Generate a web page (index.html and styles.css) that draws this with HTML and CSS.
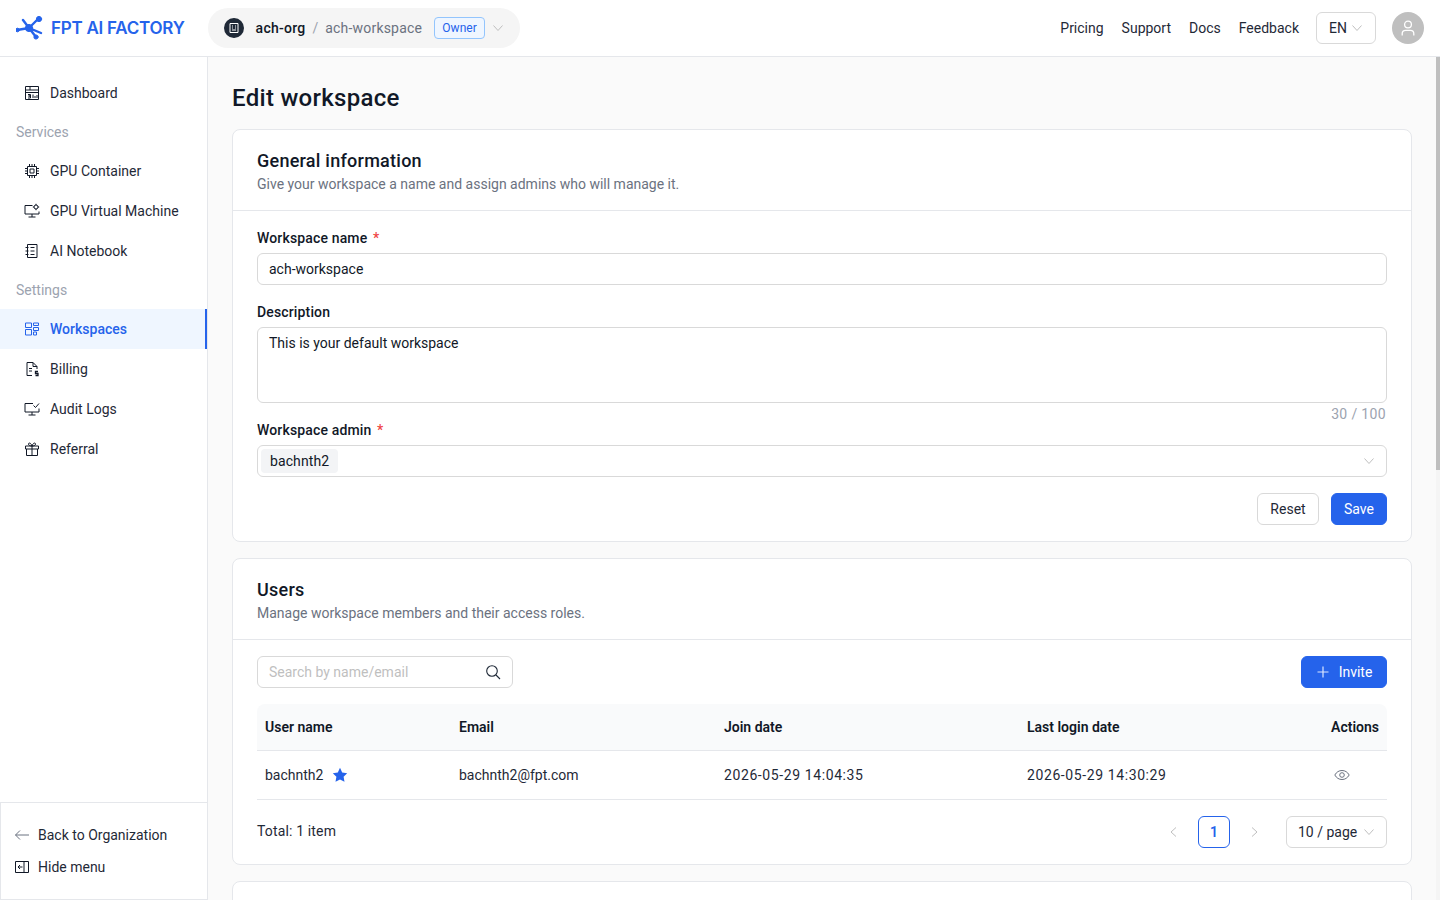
FILE: index.html
```html
<!DOCTYPE html>
<html lang="en">
<head>
    <meta charset="UTF-8">
    <title>Edit workspace - FPT AI Factory</title>
    <link rel="stylesheet" href="styles.css">
</head>
<body>
    <header class="topbar">
        <a class="logo">
            <svg class="logo-mark" viewBox="1 1 30 26" width="30" height="26">
                <g fill="#2563eb" stroke="#2563eb" stroke-linecap="round">
                    <path d="M2 16 L14 14 M14 14 L24 4 M14 14 L21 23 M14 14 L8 6 M14 14 L26 19" stroke-width="2.400" fill="none"/>
                    <circle cx="2.500" cy="16" r="1.800"/>
                    <circle cx="14" cy="14" r="3.600"/>
                    <circle cx="24" cy="5" r="2.600"/>
                    <circle cx="21" cy="23" r="2.100"/>
                </g>
            </svg>
            <span>FPT AI FACTORY</span>
        </a>
        <div class="context">
            <span class="org-icon">
                <svg viewBox="0 0 12 12" width="12" height="12" fill="none" stroke="#fff" stroke-width="1">
                    <path d="M2 1.500h8v9H2z M4 4h1 M7 4h1 M4 6h1 M7 6h1 M4 8h4"/>
                </svg>
            </span>
            <span class="org-name">ach-org</span>
            <span class="context-sep">/</span>
            <span class="workspace-name">ach-workspace</span>
            <span class="role-tag">Owner</span>
            <svg class="chevron" viewBox="0 0 12 12" width="12" height="12"><path d="M1.500 3.500 L6 8.500 L10.500 3.500"/></svg>
        </div>
        <nav class="top-links">
            <a>Pricing</a>
            <a>Support</a>
            <a>Docs</a>
            <a>Feedback</a>
        </nav>
        <div class="lang-select">
            <span>EN</span>
            <svg class="chevron" viewBox="0 0 12 12" width="12" height="12"><path d="M1.500 3.500 L6 8.500 L10.500 3.500"/></svg>
        </div>
        <span class="avatar">
            <svg viewBox="0 0 18 18" width="18" height="18" fill="none" stroke="#fff" stroke-width="1.300">
                <circle cx="9" cy="5.500" r="3.400"/>
                <path d="M3.200 16.500v-1.800c0-2 1.600-3.400 3.400-3.400h4.800c1.800 0 3.400 1.400 3.400 3.400v1.800"/>
            </svg>
        </span>
    </header>

    <div class="layout">
        <aside class="sidebar">
            <nav class="side-nav">
                <a class="nav-item">
                    <svg class="icon" viewBox="0 0 16 16"><path d="M1.500 1.500h13v13h-13z M1.500 5h13 M6 1.500V5 M1.500 7.500h13 M4 9.500h2.500v1.500H4.500h2v2H4 M9 9.500V13 M11 11v2 M13 10v3"/></svg>
                    Dashboard
                </a>
                <div class="nav-label">Services</div>
                <a class="nav-item">
                    <svg class="icon" viewBox="0 0 16 16"><path d="M3.500 3.500h9v9h-9z M6 6h4v4H6z M5.500 1v2.500 M8 1v2.500 M10.500 1v2.500 M5.500 12.500V15 M8 12.500V15 M10.500 12.500V15 M1 5.500h2.500 M1 8h2.500 M1 10.500h2.500 M12.500 5.500H15 M12.500 8H15 M12.500 10.500H15"/></svg>
                    GPU Container
                </a>
                <a class="nav-item">
                    <svg class="icon" viewBox="0 0 16 16"><path d="M8.500 2.500H1v8.500h14V8.500 M8 11v3 M4.500 14h7"/><circle cx="12" cy="4" r="2"/><path d="M12 .8v1.200 M12 6v1.200 M8.800 4H10 M14 4h1.200"/></svg>
                    GPU Virtual Machine
                </a>
                <a class="nav-item">
                    <svg class="icon" viewBox="0 0 16 16"><path d="M3.500 1.500h9.500v13H3.500z M1.500 4.500h3 M1.500 8h3 M1.500 11.500h3 M6.500 4.500h4 M6.500 8h4 M6.500 11.500h4"/></svg>
                    AI Notebook
                </a>
                <div class="nav-label">Settings</div>
                <a class="nav-item active">
                    <svg class="icon" viewBox="0 0 16 16"><path d="M1.500 2h6v4.500h-6z M9.500 2h5v2.500h-5z M9.500 6.500h5v3h-5z M1.500 8.500h6v5.500h-6z M9.500 11h3v3h-3z"/></svg>
                    Workspaces
                </a>
                <a class="nav-item">
                    <svg class="icon" viewBox="0 0 16 16"><path d="M9 1.500H3v13h5 M9 1.500l4 4v2.500 M9 1.500v4h4 M5 7.500h3 M5 10h3"/><path d="M14 10.500h-2.500v2h2.500v2h-2.500" stroke-width="1.300"/></svg>
                    Billing
                </a>
                <a class="nav-item">
                    <svg class="icon" viewBox="0 0 16 16"><path d="M9 2.500H1v8.500h14V7.500 M8 11v3 M4.500 14h7 M9.500 4.500l2 2 3.500-4"/></svg>
                    Audit Logs
                </a>
                <a class="nav-item">
                    <svg class="icon" viewBox="0 0 16 16"><path d="M1.500 5h13v3h-13z M2.500 8v6.500h11V8 M8 5v9.500 M8 5C6 5 4.500 4.300 4.500 3 4.500 1.600 6.800 1.300 8 5 M8 5c2 0 3.500-.7 3.500-2 0-1.400-2.300-1.700-3.500 2"/></svg>
                    Referral
                </a>
            </nav>
            <div class="side-bottom">
                <a class="bottom-item">
                    <svg class="icon back-icon" viewBox="0 0 16 16"><path d="M15 8H1.500 M6 3.500 L1.500 8 L6 12.500"/></svg>
                    Back to Organization
                </a>
                <a class="bottom-item">
                    <svg class="icon" viewBox="0 0 16 16"><path d="M1.500 2.500h13v11h-13z M10 2.500v11 M8.500 8H4 M6 6L4 8l2 2"/></svg>
                    Hide menu
                </a>
            </div>
        </aside>

        <main class="main">
            <h1 class="page-title">Edit workspace</h1>

            <section class="card">
                <div class="card-head">
                    <h2>General information</h2>
                    <p>Give your workspace a name and assign admins who will manage it.</p>
                </div>
                <div class="card-body">
                    <div class="field">
                        <label class="required">Workspace name</label>
                        <div class="input">ach-workspace</div>
                    </div>
                    <div class="field field-counted">
                        <label>Description</label>
                        <div class="input textarea">This is your default workspace</div>
                        <div class="count">30 / 100</div>
                    </div>
                    <div class="field">
                        <label class="required">Workspace admin</label>
                        <div class="input select">
                            <span class="select-tag">bachnth2</span>
                            <svg class="chevron" viewBox="0 0 12 12" width="12" height="12"><path d="M1.500 3.500 L6 8.500 L10.500 3.500"/></svg>
                        </div>
                    </div>
                    <div class="form-actions">
                        <button class="btn btn-reset">Reset</button>
                        <button class="btn btn-primary btn-save">Save</button>
                    </div>
                </div>
            </section>

            <section class="card">
                <div class="card-head">
                    <h2>Users</h2>
                    <p>Manage workspace members and their access roles.</p>
                </div>
                <div class="card-body">
                    <div class="toolbar">
                        <div class="search">
                            <span>Search by name/email</span>
                            <svg viewBox="0 0 16 16" width="16" height="16" fill="none" stroke="#1f2937" stroke-width="1.100"><circle cx="7" cy="7" r="5.300"/><path d="M11 11l4 4"/></svg>
                        </div>
                        <button class="btn btn-primary btn-invite">
                            <svg viewBox="0 0 14 14" width="14" height="14" fill="none" stroke="#dbe6ff" stroke-width="1.200"><path d="M7 1.500v11 M1.500 7h11"/></svg>
                            Invite
                        </button>
                    </div>
                    <table class="users">
                        <thead>
                            <tr>
                                <th class="col-name">User name</th>
                                <th class="col-email">Email</th>
                                <th class="col-join">Join date</th>
                                <th>Last login date</th>
                                <th class="col-actions">Actions</th>
                            </tr>
                        </thead>
                        <tbody>
                            <tr>
                                <td>
                                    <span class="user-cell">bachnth2
                                        <svg viewBox="0 0 16 16" width="16" height="16" fill="#2563eb"><path d="M8 .8l2.200 4.700 5 .7-3.600 3.500.9 5.100L8 12.400l-4.500 2.400.9-5.100L.8 6.200l5-.7z"/></svg>
                                    </span>
                                </td>
                                <td>bachnth2@fpt.com</td>
                                <td class="date">2026-05-29 14:04:35</td>
                                <td class="date">2026-05-29 14:30:29</td>
                                <td class="col-actions">
                                    <svg class="eye" viewBox="0 0 16 16" width="16" height="16" fill="none" stroke="#6b7280" stroke-width="1"><path d="M.8 8C2.500 5 5 3.500 8 3.500S13.500 5 15.200 8C13.500 11 11 12.500 8 12.500S2.500 11 .8 8z"/><circle cx="8" cy="8" r="2.300"/></svg>
                                </td>
                            </tr>
                        </tbody>
                    </table>
                    <div class="table-foot">
                        <span class="total">Total: 1 item</span>
                        <div class="pager">
                            <svg class="pager-arrow" viewBox="0 0 12 12" width="12" height="12"><path d="M8 1.500L3 6l5 4.500"/></svg>
                            <span class="page-current">1</span>
                            <svg class="pager-arrow" viewBox="0 0 12 12" width="12" height="12"><path d="M4 1.500L9 6l-5 4.500"/></svg>
                            <div class="page-size">
                                10 / page
                                <svg class="chevron" viewBox="0 0 12 12" width="12" height="12"><path d="M1.500 3.500 L6 8.500 L10.500 3.500"/></svg>
                            </div>
                        </div>
                    </div>
                </div>
            </section>

            <section class="card card-next"></section>
        </main>

        <div class="scroll-track"><div class="scroll-thumb"></div></div>
    </div>
</body>
</html>
```

FILE: styles.css
```css
* {
    box-sizing: border-box;
}

body {
    margin: 0;
    height: 100vh;
    overflow: hidden;
    display: flex;
    flex-direction: column;
    font-family: Roboto, "Liberation Sans", sans-serif;
    font-size: 14px;
    line-height: 22px;
    color: #1f2937;
    background-color: #fff;
}

.chevron {
    flex: none;
    fill: none;
    stroke: #bfbfbf;
    stroke-width: 1;
}

/* top bar */

.topbar {
    flex: none;
    height: 57px;
    display: flex;
    align-items: center;
    padding: 0 16px;
    border-bottom: 1px solid #e5e7eb;
    background-color: #fff;
}

.logo {
    width: 192px;
    display: flex;
    align-items: center;
    gap: 5px;
    color: #2563eb;
    font-family: Inter, sans-serif;
    font-size: 17px;
    font-weight: 600;
    letter-spacing: -0.25px;
}

.context {
    width: 312px;
    height: 40px;
    display: flex;
    align-items: center;
    padding: 0 16px;
    border-radius: 20px;
    white-space: nowrap;
    background-color: #f5f5f5;
}

.org-icon {
    width: 20px;
    height: 20px;
    margin-right: 12px;
    display: flex;
    align-items: center;
    justify-content: center;
    border-radius: 50%;
    background-color: #1f2937;
}

.org-name {
    font-weight: 500;
    letter-spacing: 0.25px;
    color: #111827;
}

.context-sep {
    margin: 0 7px;
    color: #9ca3af;
}

.workspace-name {
    letter-spacing: 0.2px;
    color: #6b7280;
    margin-right: 12px;
}

.role-tag {
    height: 22px;
    padding: 0 7px;
    margin-right: 7px;
    font-size: 12px;
    line-height: 20px;
    letter-spacing: 0.1px;
    color: #2563eb;
    border: 1px solid #93c5fd;
    border-radius: 4px;
    background-color: #eff6ff;
}

.top-links {
    margin-left: auto;
    display: flex;
    gap: 18px;
}

.lang-select {
    width: 60px;
    height: 32px;
    margin-left: 17px;
    display: flex;
    align-items: center;
    justify-content: space-between;
    padding: 0 12px;
    border: 1px solid #d9d9d9;
    border-radius: 6px;
}

.avatar {
    width: 32px;
    height: 32px;
    margin-left: 16px;
    display: flex;
    align-items: center;
    justify-content: center;
    border-radius: 50%;
    background-color: #bfbfbf;
}

/* sidebar */

.layout {
    flex: 1;
    min-height: 0;
    display: flex;
}

.sidebar {
    flex: none;
    width: 208px;
    display: flex;
    flex-direction: column;
    justify-content: space-between;
    border-right: 1px solid #e5e7eb;
}

.side-nav {
    padding-top: 16px;
}

.icon {
    flex: none;
    width: 16px;
    height: 16px;
    fill: none;
    stroke: #111827;
    stroke-width: 1;
}

.nav-item {
    height: 40px;
    display: flex;
    align-items: center;
    gap: 10px;
    padding-left: 24px;
}

.nav-item.active {
    color: #2563eb;
    font-weight: 500;
    background-color: #eff6ff;
    border-right: 2px solid #2563eb;
}

.nav-item.active .icon {
    stroke: #2563eb;
}

.nav-label {
    height: 38px;
    line-height: 38px;
    padding-left: 16px;
    color: #9ca3af;
}

.side-bottom {
    height: 98px;
    padding: 16px 0;
    border: 1px solid #e5e7eb;
    border-right: none;
}

.bottom-item {
    height: 32px;
    display: flex;
    align-items: center;
    gap: 8px;
    padding-left: 13px;
}

.back-icon {
    stroke: #6b7280;
}

/* main column */

.main {
    flex: 1;
    min-width: 0;
    overflow: hidden;
    padding: 24px;
    background-color: #fafafa;
}

.scroll-track {
    flex: none;
    width: 4px;
    background-color: #f5f5f5;
}

.scroll-thumb {
    height: 413px;
    background-color: #bfbfbf;
}

.page-title {
    margin: 0 0 14px;
    font-size: 24px;
    line-height: 34px;
    font-weight: 500;
    letter-spacing: 0.3px;
    color: #111827;
}

.card {
    margin-bottom: 16px;
    background-color: #fff;
    border: 1px solid #e5e7eb;
    border-radius: 8px;
}

.card-next {
    height: 872px;
    margin-bottom: 0;
}

.card-head {
    padding: 18px 24px 15px;
    border-bottom: 1px solid #e5e7eb;
}

.card-head h2 {
    margin: 0 0 -1px;
    font-size: 18px;
    line-height: 26px;
    font-weight: 500;
    letter-spacing: 0.25px;
    color: #111827;
}

.card-head p {
    margin: 0;
    color: #6b7280;
}

.card-body {
    padding: 16px 24px;
}

/* form */

.field {
    margin-bottom: 16px;
}

.field-counted {
    margin-bottom: 0;
}

.field label {
    display: block;
    margin-bottom: 4px;
    font-weight: 500;
    letter-spacing: 0.15px;
    color: #111827;
}

.required::after {
    content: " *";
    margin-left: 2px;
    color: #ef4444;
}

.input {
    height: 32px;
    padding: 4px 11px;
    border: 1px solid #d9d9d9;
    border-radius: 6px;
    color: #111827;
}

.textarea {
    height: 76px;
}

.count {
    height: 16px;
    padding-right: 1px;
    text-align: right;
    letter-spacing: 0.35px;
    color: #9ca3af;
}

.select {
    display: flex;
    align-items: center;
    justify-content: space-between;
    padding: 0 11px 0 3px;
}

.select-tag {
    height: 24px;
    padding: 0 9px;
    line-height: 24px;
    letter-spacing: 0.1px;
    border-radius: 4px;
    background-color: #f3f4f6;
}

.form-actions {
    display: flex;
    justify-content: flex-end;
    gap: 12px;
}

.btn {
    height: 32px;
    padding: 0;
    font: inherit;
    color: #1f2937;
    background-color: #fff;
    border: 1px solid #d9d9d9;
    border-radius: 6px;
}

.btn-primary {
    color: #fff;
    background-color: #2563eb;
    border-color: #2563eb;
}

.btn-reset {
    width: 62px;
}

.btn-save {
    width: 56px;
}

/* users table */

.toolbar {
    display: flex;
    justify-content: space-between;
    margin-bottom: 16px;
}

.search {
    width: 256px;
    height: 32px;
    display: flex;
    align-items: center;
    justify-content: space-between;
    padding: 0 11px;
    color: #bfbfbf;
    border: 1px solid #d9d9d9;
    border-radius: 6px;
}

.btn-invite {
    width: 86px;
    display: flex;
    align-items: center;
    justify-content: center;
    gap: 9px;
}

.users {
    width: 100%;
    border-collapse: separate;
    border-spacing: 0;
    table-layout: fixed;
}

.users th {
    height: 47px;
    padding: 0 8px;
    text-align: left;
    font-weight: 600;
    color: #111827;
    background-color: #f9fafb;
    border-bottom: 1px solid #e5e7eb;
}

.users th:first-child {
    border-top-left-radius: 8px;
}

.users th:last-child {
    border-top-right-radius: 8px;
}

.users td {
    height: 49px;
    padding: 0 8px;
    border-bottom: 1px solid #e5e7eb;
}

.users .col-name {
    width: 194px;
}

.users .col-email {
    width: 265px;
}

.users .col-join {
    width: 303px;
}

.users .col-actions {
    width: 120px;
    text-align: right;
}

.date {
    letter-spacing: 0.6px;
}

.user-cell {
    display: flex;
    align-items: center;
    gap: 9px;
}

.eye {
    display: block;
    margin: 0 29px 0 auto;
}

.table-foot {
    display: flex;
    align-items: center;
    justify-content: space-between;
    margin-top: 16px;
}

.total {
    margin-bottom: 2px;
    letter-spacing: 0.15px;
}

.pager {
    display: flex;
    align-items: center;
}

.pager-arrow {
    margin: 0 18px;
    fill: none;
    stroke: #bfbfbf;
    stroke-width: 1;
}

.page-current {
    width: 32px;
    height: 32px;
    line-height: 30px;
    text-align: center;
    font-weight: 600;
    color: #2563eb;
    border: 1px solid #2563eb;
    border-radius: 6px;
}

.page-size {
    width: 101px;
    height: 32px;
    margin-left: 8px;
    display: flex;
    align-items: center;
    justify-content: space-between;
    padding: 0 11px;
    border: 1px solid #d9d9d9;
    border-radius: 6px;
}
```
